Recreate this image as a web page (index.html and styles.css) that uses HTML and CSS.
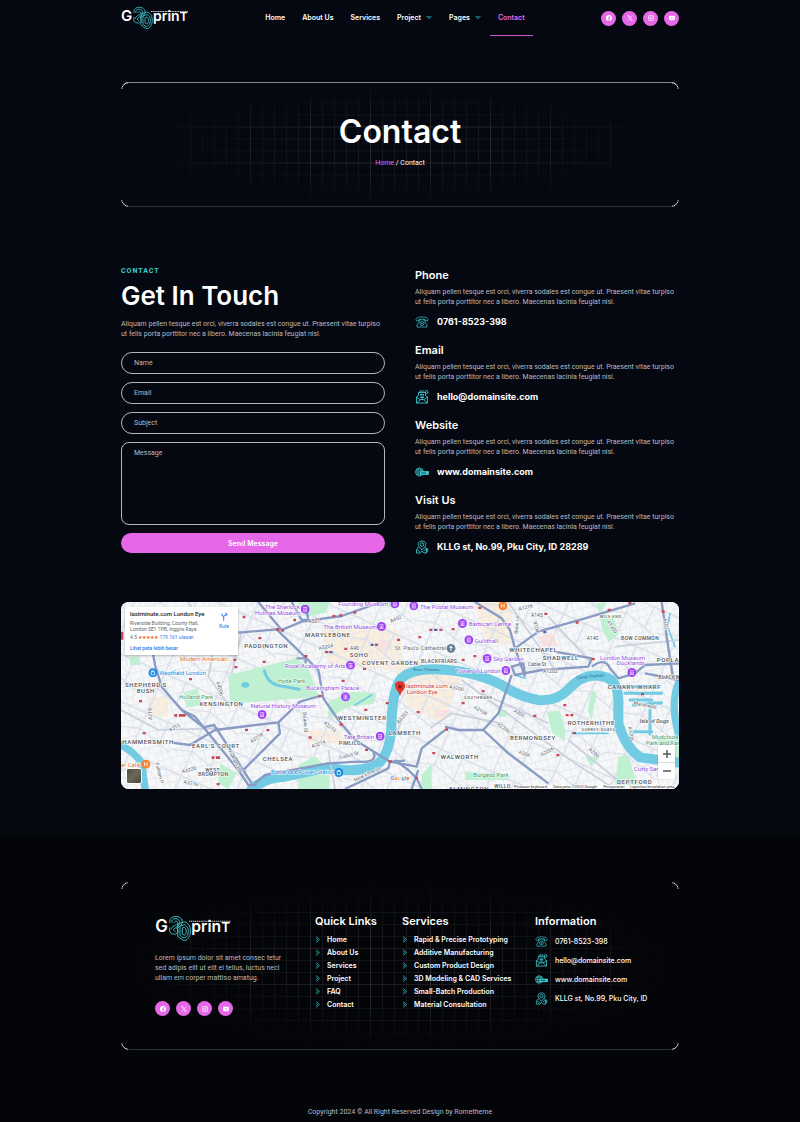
FILE: index.html
```html
<!DOCTYPE html>
<html lang="en">
<head>
<meta charset="utf-8">
<meta name="viewport" content="width=device-width, initial-scale=1">
<title>Contact – G3Dprint</title>
<link rel="stylesheet" href="styles.css">
</head>
<body>
<svg class="sprite" aria-hidden="true">
  <symbol id="print-mark" viewBox="0 0 68 24">
    <g fill="none" stroke="#46cfd4" stroke-width=".8" stroke-linejoin="round">
      <path d="M13 7C12 3 16 .5 20 1.500C24 2.500 25 6 23 9L19 12C21 13 21 17 17 17C13 17 12 14 13 11"/>
      <path d="M15 7C14 4 17 2.500 19.500 3.500C22 4.500 22.500 7 21 9L16 13L18 15"/>
      <path d="M17 7C17 5 20 5 20 7C20 9 14 10 14 13"/>
      <path d="M20 8L26 6C30 7 32 11 31 17C30 21 27 24 24 22L20 19Z"/>
      <path d="M22 10L26 8.500C29 10 30 13 29 17C28 20 26 21 24 20L22 18Z"/>
      <path d="M24 11.500L26 11C28 12 28 17 26 18L24 17Z"/>
    </g>
    <path d="M30 5.500H67" stroke="#fff" stroke-width="1" stroke-dasharray="1.200 .5" opacity=".8"/>
  </symbol>
  <symbol id="facebook" viewBox="0 0 16 16"><circle cx="8" cy="8" r="8" fill="#fff"/><path d="M7 16V10H5V7.500H7V6C7 4 8 3 10 3H11.500V5H10.300C9.500 5 9.300 5.500 9.300 6V7.500H11.500L11 10H9.300V16Z" fill="#e667e8"/></symbol>
  <symbol id="x" viewBox="0 0 16 16"><path d="M1.500 1.500H5L14.500 14.500H11ZM14 1L9 7M7 9L2 15" fill="none" stroke="#fff" stroke-width="1.600"/></symbol>
  <symbol id="instagram" viewBox="0 0 16 16"><rect x="1" y="1" width="14" height="14" rx="4" fill="none" stroke="#fff" stroke-width="1.800"/><circle cx="8" cy="8" r="3.200" fill="none" stroke="#fff" stroke-width="1.800"/><circle cx="12" cy="4" r="1" fill="#fff"/></symbol>
  <symbol id="youtube" viewBox="0 0 16 16"><rect x="0" y="2" width="16" height="12" rx="3.500" fill="#fff"/><path d="M6.500 5.500L11 8L6.500 10.500Z" fill="#e667e8"/></symbol>
  <symbol id="down" viewBox="0 0 12 8"><path d="M1 1L6 6.500L11 1M3.500 1L6 3.800L8.500 1" fill="none" stroke="#2fc4be" stroke-width="1.400"/></symbol>
  <symbol id="right" viewBox="0 0 8 12"><path d="M1 1L6.500 6L1 11M1 4L3 6L1 8" fill="none" stroke="#2fb5bd" stroke-width="1.500"/></symbol>
  <symbol id="phone" viewBox="0 0 28 24"><g fill="none" stroke="#3fd0d8" stroke-width="1.400"><path d="M2 9C1 4 7 2 14 2S27 4 26 9L21 10L20 6.500H8L7 10Z"/><path d="M9 7L8 12L4 18V22H24V18L20 12L19 7M11 7V9M17 7V9"/><circle cx="14" cy="15" r="4"/><circle cx="14" cy="15" r="1"/></g></symbol>
  <symbol id="mail" viewBox="0 0 28 28"><g fill="none" stroke="#3fd0d8" stroke-width="1.700"><path d="M3 14L7 11V5H21V11L25 14V26H3ZM3 14L11 20M25 14L17 20M3 26L11 19H17L25 26M10 9H18M10 12H18M10 15H18M12 18H16"/><circle cx="23" cy="4" r="3"/><path d="M10 5V2H18"/></g></symbol>
  <symbol id="web" viewBox="0 0 28 24"><g fill="none" stroke="#3fd0d8" stroke-width="1.400"><circle cx="9" cy="12" r="8"/><ellipse cx="9" cy="12" rx="3.500" ry="8"/><path d="M1 12H9M2 8H16M2 16H9"/><rect x="10" y="11" width="17" height="6" fill="#3fd0d8"/><path d="M12 14H22" stroke="#050810"/></g></symbol>
  <symbol id="place" viewBox="0 0 28 28"><g fill="none" stroke="#3fd0d8" stroke-width="1.700"><path d="M14 20L8 13C4 7 8 2 14 2S24 7 20 13Z"/><circle cx="14" cy="9" r="3.500"/><path d="M7 14L3 20V26H11L14 22L18 26H23V18L20 14M5 20L10 23M17 21L25 17L26 22L21 26"/></g></symbol>
  <symbol id="museum" viewBox="0 0 26 26"><circle cx="13" cy="13" r="13" fill="#a142f4"/><path d="M7 8H19M9 11V17M13 11V17M17 11V17M7 19H19" stroke="#fff" stroke-width="2"/></symbol>
  <symbol id="shop" viewBox="0 0 26 26"><circle cx="13" cy="13" r="13" fill="#168ae8"/><path d="M8 10H18V19H8ZM10 10V7H16V10" fill="none" stroke="#fff" stroke-width="2"/></symbol>
  <symbol id="cafe" viewBox="0 0 26 26"><circle cx="13" cy="13" r="13" fill="#f5832f"/><path d="M9 7V19M17 7V19M9 13H17" fill="none" stroke="#fff" stroke-width="2"/></symbol>
</svg>

<header class="wrap header">
  <a href="#" aria-label="G3Dprint home"><svg class="logo" viewBox="0 0 68 24"><text class="logo-word" x="0" y="15" font-size="15">G</text><use href="#print-mark" width="68" height="24"/><text class="logo-word" x="32" y="15" font-size="14">prin<tspan font-size="12">T</tspan></text></svg></a>
  <nav class="nav" aria-label="Main">
    <a href="#">Home</a><a href="#">About Us</a><a href="#">Services</a>
    <a href="#">Project <svg class="chevron"><use href="#down"/></svg></a>
    <a href="#">Pages <svg class="chevron"><use href="#down"/></svg></a>
    <a class="current" href="#">Contact</a>
  </nav>
  <div class="social">
    <a href="#" aria-label="Facebook"><svg><use href="#facebook"/></svg></a>
    <a href="#" aria-label="X"><svg><use href="#x"/></svg></a>
    <a href="#" aria-label="Instagram"><svg><use href="#instagram"/></svg></a>
    <a href="#" aria-label="YouTube"><svg><use href="#youtube"/></svg></a>
  </div>
</header>

<main>
  <section class="wrap frame hero">
    <h1>Contact</h1>
    <p><a href="#">Home</a> / Contact</p>
  </section>

  <section class="wrap contact">
    <div>
      <p class="eyebrow">CONTACT</p>
      <h2>Get In Touch</h2>
      <p class="copy">Aliquam pellen tesque est orci, viverra sodales est congue ut. Praesent vitae turpiso ut felis porta porttitor nec a libero. Maecenas lacinia feugiat nisl.</p>
      <form class="form">
        <input type="text" aria-label="Name" placeholder="Name">
        <input type="email" aria-label="Email" placeholder="Email">
        <input type="text" aria-label="Subject" placeholder="Subject">
        <textarea aria-label="Message" placeholder="Message"></textarea>
        <button type="submit">Send Message</button>
      </form>
    </div>
    <div class="details">
      <article><h3>Phone</h3><p class="copy">Aliquam pellen tesque est orci, viverra sodales est congue ut. Praesent vitae turpiso ut felis porta porttitor nec a libero. Maecenas lacinia feugiat nisl.</p><p class="value"><svg><use href="#phone"/></svg>0761-8523-398</p></article>
      <article><h3>Email</h3><p class="copy">Aliquam pellen tesque est orci, viverra sodales est congue ut. Praesent vitae turpiso ut felis porta porttitor nec a libero. Maecenas lacinia feugiat nisl.</p><p class="value"><svg><use href="#mail"/></svg>hello@domainsite.com</p></article>
      <article><h3>Website</h3><p class="copy">Aliquam pellen tesque est orci, viverra sodales est congue ut. Praesent vitae turpiso ut felis porta porttitor nec a libero. Maecenas lacinia feugiat nisl.</p><p class="value"><svg><use href="#web"/></svg>www.domainsite.com</p></article>
      <article><h3>Visit Us</h3><p class="copy">Aliquam pellen tesque est orci, viverra sodales est congue ut. Praesent vitae turpiso ut felis porta porttitor nec a libero. Maecenas lacinia feugiat nisl.</p><p class="value"><svg><use href="#place"/></svg>KLLG st, No.99, Pku City, ID 28289</p></article>
    </div>
  </section>

  <section class="wrap map" aria-label="Map">
    <svg class="tiles" viewBox="18 16 1674 561" preserveAspectRatio="xMidYMid slice">
      <defs>
        <pattern id="streets" width="62" height="46" patternUnits="userSpaceOnUse" patternTransform="rotate(-14)">
          <path d="M0 5H62M0 28H40M22 5V46M48 0V28M40 28V46M5 28V46" stroke="#e4e8ee" stroke-width="3" fill="none"/>
        </pattern>
        <pattern id="lanes" width="170" height="130" patternUnits="userSpaceOnUse" patternTransform="rotate(24)">
          <path d="M0 20H170M60 0V130M0 90L60 70L170 100M130 20V95" stroke="#d8dee8" stroke-width="4" fill="none"/>
        </pattern>
      </defs>
      <rect width="1700" height="600" fill="#f6f7f8"/>
      <g fill="#fbeedd"><path d="M620 90L860 100L860 200L1040 240L980 380L880 330L840 220L640 210Z"/><path d="M1080 16H1190V140H1110ZM100 300H160V360H100ZM580 400H680V440H580Z"/></g>
      <path d="M1270 120L1310 110L1330 145L1280 150ZM790 130H830V160H790ZM960 340H1010V360H960Z" fill="#fbe0dd"/>
      <rect width="1700" height="600" fill="url(#streets)"/>
      <rect width="1700" height="600" fill="url(#lanes)"/>
      <g fill="#c0f0d2">
        <path d="M340 235L545 185L580 215L612 300L345 322ZM545 16H645L632 48L575 60ZM640 315L710 285L785 290L775 322L700 330L640 365ZM550 505L600 478L644 520V577H550ZM205 290L248 275L262 325L215 332ZM315 500L365 530L340 577L310 560Z"/>
        <path d="M1450 45L1495 60L1512 110L1482 137L1462 100ZM1295 345L1335 342L1352 400L1350 432L1312 410ZM1050 525L1180 532L1178 550L1050 550ZM920 535L950 500V577H918ZM1440 20H1475L1455 50ZM1620 420H1692V490L1640 460ZM1430 280L1445 290L1430 370L1418 340ZM1510 480L1540 475L1570 577H1500ZM45 180H75V205H45ZM790 16H850V32H800ZM1150 340H1175V360H1150ZM1410 480L1455 480L1430 510Z"/>
      </g>
      <g fill="none" stroke="#70cbe3" stroke-linecap="round" stroke-linejoin="round">
        <path stroke-width="30" d="M400 592Q430 545 510 540L640 512Q710 530 775 510Q820 490 829 400Q830 290 855 250Q880 218 960 218Q1070 220 1160 265Q1210 300 1270 310Q1325 315 1360 278Q1410 225 1465 240Q1512 248 1510 320V380Q1530 450 1575 482L1692 498"/>
        <path stroke-width="22" d="M8 440Q60 465 80 500L92 590M1690 260Q1665 320 1690 410"/>
        <path stroke-width="9" d="M448 222Q460 265 500 268L552 278M1522 270H1620M1530 290H1640M1545 310H1610M1555 325L1640 318M1605 340V412M1550 405H1610"/>
        <path stroke-width="5" d="M1370 410H1480M1665 50L1658 90L1680 150M1200 235L1230 245M720 325L770 295"/>
        <ellipse cx="391" cy="265" rx="12" ry="8" fill="#70cbe3" stroke="none"/>
      </g>
      <g fill="none" stroke="#c9d0dc" stroke-width="5">
        <path d="M18 340L130 400L310 395M220 16L300 140L280 240L345 330M640 460L660 577M380 105L350 230M870 350L840 420M945 395L1010 350L1160 380M1040 250L1380 500L1500 577M1100 290L1300 380M1180 16L1320 220M1300 60L1430 200M1500 150L1692 130M1360 430L1540 577"/>
      </g>
      <g fill="none" stroke="#899bc4" stroke-width="7" stroke-linejoin="round">
        <path d="M105 120L120 205L140 270L200 340L265 392L297 385L340 450L410 560"/>
        <path d="M200 340L240 360L370 520L400 565H425"/>
        <path d="M170 438L225 445L300 400L490 377L555 315L615 298"/>
        <path d="M490 377L495 410L385 520"/>
        <path d="M370 108L485 98L610 220L625 305L670 370L720 430L825 495L870 492"/>
        <path d="M430 16L500 100L560 75L680 58L800 16"/>
        <path d="M530 16L560 70H580L575 40M545 185H572V200"/>
        <path d="M420 560L450 535L640 500L730 495Q790 500 775 465M825 495L820 515L690 577"/>
        <path d="M1080 16L1160 65L1185 100L1200 155L1230 240M1190 235L1150 350L1105 400L1180 470L1300 560"/>
        <path d="M1200 155L1270 105L1410 65L1560 20"/>
        <path d="M990 390L1030 400L1105 400M990 400L920 455L905 510L825 495M910 520L890 577"/>
        <path d="M840 490L880 520L905 545L920 577M1320 165L1430 185L1420 210L1280 220L1200 235L1190 210L1225 200L1230 235"/>
        <path d="M1430 210Q1470 180 1485 215L1510 245L1560 230L1590 205L1692 200M1590 230L1692 250M1640 16L1655 120L1675 250"/>
      </g>
      <g fill="#c94759">
        <path d="M383 57h8v8h-8zM535 66h8v8h-8zM484 94h9v8h-9zM499 97h8v8h-8zM430 121h9v7h-9zM355 186h9v7h-9zM443 192h9v7h-9zM358 208h9v7h-9zM568 175h9v7h-9zM610 295h10v7h-10zM222 244h9v7h-9zM72 310h9v7h-9zM178 352h9v8h-9zM192 352h20v8h-20zM83 406h9v7h-9zM390 396h9v7h-9zM454 397h9v7h-9zM581 419h9v7h-9zM674 380h9v7h-9zM748 336h9v7h-9zM812 316h9v7h-9zM680 249h9v7h-9zM744 213h9v7h-9zM630 163h10v7h-10zM688 153h9v7h-9zM780 141h9v7h-9zM846 126h9v7h-9zM290 479h8v8h-8zM303 479h12v8h-12zM305 559h9v7h-9zM821 491h9v7h-9zM750 456h9v7h-9zM652 55h9v7h-9zM673 53h9v7h-9zM715 44h9v7h-9zM943 96h9v7h-9zM973 96h9v7h-9zM1010 94h9v7h-9zM910 118h9v7h-9zM1040 186h9v7h-9zM1075 175h9v7h-9zM1100 280h9v7h-9zM1040 316h9v7h-9zM905 343h9v7h-9zM1255 354h9v7h-9zM1352 352h9v7h-9zM1366 352h9v7h-9zM1374 406h9v7h-9zM1324 472h9v7h-9zM952 466h9v7h-9zM900 540h9v7h-9zM990 395h9v7h-9zM1345 322h9v7h-9zM1430 184h9v7h-9zM1382 74h9v7h-9zM1478 36h9v7h-9zM1540 16h9v7h-9zM1640 41h9v7h-9zM1578 289h9v7h-9zM1288 48h9v7h-9zM1090 30h9v7h-9zM18 105h7v24h-7z"/>
        <path d="M643 163h10v7h-10zM767 141h9v7h-9zM957 96h10v7h-10zM1285 103h9v7h-9z" fill="#5963a8"/>
      </g>
      <g class="road">
        <text x="580" y="78">A501</text><text transform="translate(828 78) rotate(-22)">A402</text><text transform="translate(612 160) rotate(-12)">A5204</text><text x="705" y="160">A40</text><text transform="translate(1212 42) rotate(-14)">A1216</text><text x="1248" y="60">A145</text><text x="1415" y="130">A140</text><text x="1238" y="209">Cable St</text><text x="1284" y="228">A1203</text><text transform="translate(1002 275) rotate(12)">A3200</text><text transform="translate(165 405) rotate(-28)">A315</text><text transform="translate(410 440) rotate(-35)">A3218</text><text transform="translate(592 454) rotate(-20)">A3214</text><text transform="translate(202 530) rotate(-15)">A3220</text><text transform="translate(205 560) rotate(12)">A3216</text><text transform="translate(675 486) rotate(-12)">Lupus St</text><text transform="translate(1075 335) rotate(30)">A2198</text><text transform="translate(1195 345) rotate(30)">A200</text><text transform="translate(1210 470) rotate(20)">A206</text><text transform="translate(1280 480) rotate(-30)">A2206</text><text transform="translate(1555 323) rotate(12)">Marshwall</text><text transform="translate(1145 385) rotate(35)">A2206</text><text transform="translate(720 555) rotate(-25)">Nine Elms Ln</text><text transform="translate(1115 120) rotate(0)"></text>
        <text transform="translate(112 370) rotate(-90)">A219</text><text transform="translate(304 256) rotate(75)">A4206</text><text transform="translate(563 345) rotate(85)">Sloane St</text><text transform="translate(340 465) rotate(62)">Fulham Rd</text><text transform="translate(120 500) rotate(75)">Fulham P</text><text transform="translate(625 380) rotate(40)">A3215</text><text transform="translate(852 382) rotate(-50)">A3203</text><text transform="translate(1255 75) rotate(75)">B108</text><text transform="translate(1475 75) rotate(55)">A1205</text><text transform="translate(1645 65) rotate(82)">A102</text><text transform="translate(1540 390) rotate(82)">A1206</text><text transform="translate(1208 112) rotate(-85)">Bank La</text><text transform="translate(1420 460) rotate(40)">A200</text>
      </g>
      <g class="area">
        <text x="388" y="154">PADDINGTON</text><text x="570" y="120">MARYLEBONE</text><text x="704" y="181">SOHO</text><text x="741" y="205">COVENT GARDEN</text><text x="30" y="271">SHEPHERD'S</text><text x="65" y="289">BUSH</text><text x="254" y="329">KENSINGTON</text><text x="668" y="369">WESTMINSTER</text><text x="22" y="443">HAMMERSMITH</text><text x="231" y="453">EARL'S COURT</text><text x="671" y="446" class="tight">PIMLICO</text><text x="443" y="492">CHELSEA</text><text x="271" y="525" class="tight">WEST</text><text x="250" y="539" class="tight">BROMPTON</text><text x="821" y="416">LAMBETH</text><text x="977" y="487">WALWORTH</text><text x="1185" y="429">BERMONDSEY</text><text x="1358" y="384">ROTHERHITHE</text><text x="1478" y="278">CANARY WHARF</text><text x="1283" y="189">SHADWELL</text><text x="1183" y="167">WHITECHAPEL</text><text x="918" y="200" class="tight">BLACKFRIARS</text><text x="1518" y="129" class="tight">BOW COMMON</text><text x="1625" y="195">POPLAR</text><text x="1630" y="247" class="tight">BLACKWALL</text><text x="1506" y="563">DEPTFORD</text><text x="1003" y="583">ELMINGTON</text><text x="1048" y="306" class="mini">SOUTHWARK</text><text x="1455" y="63" class="mini">MILE END</text><text x="1400" y="403" class="mini">SURREY QUAYS</text><text x="1138" y="574" class="tight">WILLO</text><text x="1574" y="380" class="isle">Isle of Dogs</text>
      </g>
      <g class="poi">
        <text x="450" y="38">The Sherlock</text><text x="420" y="54">Holmes Museum</text><text x="670" y="28">Founding Museum</text><text x="625" y="98">The British Museum</text><text x="510" y="214">Royal Academy of Arts</text><text x="574" y="279">Buckingham Palace</text><text x="407" y="333">Natural History Museum</text><text x="686" y="427">Tate Britain</text><text x="915" y="36">The Postal Museum</text><text x="1061" y="89">Barbican Centre</text><text x="1079" y="138">Guildhall</text><text x="1135" y="194">Sky Garden</text><text x="1022" y="230">Tower of London</text><text x="1455" y="189">London Museum</text><text x="1505" y="206">Docklands</text><text x="1557" y="524">Cutty Sark</text>
        <g class="blue"><text x="133" y="236">Westfield London</text><text x="468" y="533">Battersea Power Station</text></g>
        <g class="green"><text x="192" y="307">Holland Park</text><text x="489" y="259">Hyde Park</text><text x="1075" y="540">Burgess Park</text><text x="1610" y="427">Mudchute</text><text x="1592" y="445">Park and Farm</text></g>
        <g class="orange"><text x="195" y="193">Modern American...</text><text x="18" y="511">er Café</text></g>
        <g class="gray"><text x="839" y="161">St. Paul's Cathedral</text></g>
        <g class="river"><text x="895" y="223">River Thames</text><text transform="translate(1385 248) rotate(-6)">Canal Thames</text></g>
        <g class="red"><text x="873" y="273">lastminute.com</text><text x="875" y="291">London Eye</text></g>
        <text x="826" y="550" fill="#4285f4" class="google">G<tspan fill="#ea4335">o</tspan><tspan fill="#fbbc05">o</tspan><tspan fill="#4285f4">g</tspan><tspan fill="#34a853">l</tspan><tspan fill="#ea4335">e</tspan></text>
      </g>
      <use href="#museum" x="557" y="24" width="27" height="27"/><use href="#museum" x="826" y="8" width="27" height="27"/><use href="#museum" x="786" y="76" width="27" height="27"/><use href="#museum" x="693" y="192" width="27" height="27"/><use href="#museum" x="678" y="287" width="27" height="27"/><use href="#museum" x="428" y="340" width="27" height="27"/><use href="#museum" x="782" y="405" width="27" height="27"/><use href="#museum" x="883" y="14" width="27" height="27"/><use href="#museum" x="1029" y="67" width="27" height="27"/><use href="#museum" x="1048" y="116" width="27" height="27"/><use href="#museum" x="1103" y="172" width="27" height="27"/><use href="#museum" x="1159" y="208" width="27" height="27"/><use href="#museum" x="1537" y="214" width="27" height="27"/>
      <use href="#shop" x="100" y="215" width="27" height="27"/><use href="#shop" x="658" y="514" width="27" height="27"/><use href="#cafe" x="1150" y="14" width="27" height="27"/><use href="#cafe" x="79" y="489" width="27" height="27"/>
      <circle cx="1008" cy="155" r="13" fill="#607d8b"/><path d="M1008 147V163M1003 152H1013" stroke="#fff" stroke-width="3"/>
      <path d="M855 298Q851 285 843 278Q834 258 850 254Q872 252 870 270Q868 280 860 286Z" fill="#e2352d"/><circle cx="855" cy="270" r="6" fill="#8d1f1b"/>
      <rect x="1195" y="565" width="497" height="12" fill="#fff" opacity=".7"/>
      <g class="credit"><text x="1197" y="574">Pintasan keyboard</text><text x="1315" y="574">Data peta ©2023 Google</text><text x="1465" y="574">Persyaratan</text><text x="1545" y="574">Laporkan kesalahan peta</text></g>
    </svg>
    <div class="place">
      <div><strong>lastminute.com London Eye</strong>
      <p>Riverside Building, County Hall,<br>London SE1 7PB, Inggris Raya</p>
      <p class="rating">4.5 <span>★★★★★</span> <a href="#">179.161 ulasan</a></p>
      <a class="larger" href="#">Lihat peta lebih besar</a></div>
      <a class="route" href="#"><svg viewBox="0 0 20 24"><path d="M9 23V13L3 5M9 13Q10 9 18 6M13 3L18 6L15 10" fill="none" stroke="#4b8df0" stroke-width="3"/></svg>Rute</a>
    </div>
    <button class="satellite" type="button" aria-label="Satellite view"></button>
    <div class="zoom"><button type="button" aria-label="Zoom in"><svg viewBox="0 0 8 8"><path d="M0 4H8M4 0V8" stroke="#555" stroke-width="1.500"/></svg></button><button type="button" aria-label="Zoom out"><svg viewBox="0 0 8 8"><path d="M0 4H8" stroke="#555" stroke-width="1.500"/></svg></button></div>
  </section>
</main>

<footer class="footer">
  <div class="wrap frame foot">
    <div class="about">
      <svg class="logo" viewBox="0 0 68 24"><text class="logo-word" x="0" y="15" font-size="15">G</text><use href="#print-mark" width="68" height="24"/><text class="logo-word" x="32" y="15" font-size="14">prin<tspan font-size="12">T</tspan></text></svg>
      <p class="copy">Lorem ipsum dolor sit amet consec tetur sed adipis elit ut elit el tellus, luctus necl ullam em corper mattiso amatug.</p>
      <div class="social">
        <a href="#" aria-label="Facebook"><svg><use href="#facebook"/></svg></a>
        <a href="#" aria-label="X"><svg><use href="#x"/></svg></a>
        <a href="#" aria-label="Instagram"><svg><use href="#instagram"/></svg></a>
        <a href="#" aria-label="YouTube"><svg><use href="#youtube"/></svg></a>
      </div>
    </div>
    <nav aria-label="Quick links">
      <h3>Quick Links</h3>
      <ul class="links">
        <li><a href="#"><svg><use href="#right"/></svg>Home</a></li><li><a href="#"><svg><use href="#right"/></svg>About Us</a></li><li><a href="#"><svg><use href="#right"/></svg>Services</a></li><li><a href="#"><svg><use href="#right"/></svg>Project</a></li><li><a href="#"><svg><use href="#right"/></svg>FAQ</a></li><li><a href="#"><svg><use href="#right"/></svg>Contact</a></li>
      </ul>
    </nav>
    <nav aria-label="Services">
      <h3>Services</h3>
      <ul class="links">
        <li><a href="#"><svg><use href="#right"/></svg>Rapid &amp; Precise Prototyping</a></li><li><a href="#"><svg><use href="#right"/></svg>Additive Manufacturing</a></li><li><a href="#"><svg><use href="#right"/></svg>Custom Product Design</a></li><li><a href="#"><svg><use href="#right"/></svg>3D Modeling &amp; CAD Services</a></li><li><a href="#"><svg><use href="#right"/></svg>Small-Batch Production</a></li><li><a href="#"><svg><use href="#right"/></svg>Material Consultation</a></li>
      </ul>
    </nav>
    <div>
      <h3>Information</h3>
      <ul class="info">
        <li><svg><use href="#phone"/></svg>0761-8523-398</li><li><svg><use href="#mail"/></svg>hello@domainsite.com</li><li><svg><use href="#web"/></svg>www.domainsite.com</li><li><svg><use href="#place"/></svg>KLLG st, No.99, Pku City, ID</li>
      </ul>
    </div>
  </div>
  <p class="copyright">Copyright 2024 © All Right Reserved Design by Rometheme</p>
</footer>
</body>
</html>
```
FILE: styles.css
```css
* { box-sizing: border-box; }
body { margin: 0; background: #050810; color: #fff; font: 7px/10px Roboto, "Liberation Sans", sans-serif; }
h1, h2, h3, p, ul { margin: 0; padding: 0; }
h1, h2, h3, .nav, .value, .links, .info, .form button { font-family: Inter, "Liberation Sans", sans-serif; }
ul { list-style: none; }
a { color: inherit; text-decoration: none; }
svg { display: block; }
.sprite { position: absolute; width: 0; height: 0; }
.wrap { width: calc(100% - 32px); max-width: 558px; margin-inline: auto; }

.header { display: flex; justify-content: space-between; align-items: center; min-height: 36px; }
.logo { width: 68px; height: 24px; overflow: visible; }
.logo-word { fill: #fff; font-family: Inter, sans-serif; font-weight: 600; }
.nav { display: flex; gap: 1px; }
.nav a { display: flex; align-items: center; gap: 5px; height: 36px; padding: 0 8px; border-bottom: 1px solid transparent; font-weight: 600; }
.nav .current { color: #e667e8; border-color: #c45bc8; }
.chevron { width: 6px; height: 5px; }
.social { display: flex; gap: 6px; }
.social a { display: grid; place-items: center; width: 15px; height: 15px; border-radius: 50%; background: #e667e8; }
.social svg { width: 6px; height: 6px; }

.frame { position: relative; border: 1px solid; border-color: #85878c transparent #303239; border-radius: 8px; isolation: isolate; }
.frame::before, .frame::after { content: ""; position: absolute; inset: -1px; pointer-events: none; }
.frame::before {
  border: 1px solid #d4d5d8; border-radius: 8px;
  mask: linear-gradient(#000 0 0) 0 0 / 7px 7px no-repeat, linear-gradient(#000 0 0) 100% 0 / 7px 7px no-repeat, linear-gradient(#000 0 0) 0 100% / 7px 7px no-repeat, linear-gradient(#000 0 0) 100% 100% / 7px 7px no-repeat;
}
.frame::after {
  z-index: -1;
  background:
    linear-gradient(90deg, #25272b 1px, transparent 1px) center / 60px 60px,
    linear-gradient(#1c1e22 1px, transparent 1px) center / 36px 36px,
    linear-gradient(90deg, #15171b 1px, transparent 1px) center / 12px 12px,
    linear-gradient(#121418 1px, transparent 1px) center / 12px 12px;
  mask: radial-gradient(closest-side, #000 40%, transparent 98%);
}
.hero { margin-top: 46px; padding: 31px 16px 38px; text-align: center; }
.hero h1 { font-size: 32px; line-height: 36px; font-weight: 600; }
.hero p { margin-top: 8px; }
.hero a { color: #e667e8; }

.contact { display: grid; grid-template-columns: 1fr 1fr; gap: 30px; padding: 59px 0 47px; }
.eyebrow { color: #3fd0d8; font-weight: 700; letter-spacing: 1px; }
.contact h2 { margin-top: 5px; font-size: 26px; line-height: 30px; font-weight: 600; }
.copy { color: #b9bbc0; }
.contact h2 + .copy { margin-top: 8px; }
.form { display: grid; gap: 8px; margin-top: 13px; }
.form input, .form textarea { width: 100%; height: 22px; padding: 0 12px; border: 1px solid #b4b6ba; border-radius: 11px; background: transparent; color: #fff; font: inherit; }
.form textarea { display: block; height: 83px; padding-top: 5px; border-radius: 8px; resize: none; }
.form ::placeholder { color: #b9bbc0; opacity: 1; }
.form button { height: 20px; padding: 0; border: 0; border-radius: 10px; background: #e667e8; color: #fff; font-size: 7px; font-weight: 600; }
.details { display: grid; gap: 14px; align-content: start; padding-top: 3px; }
.details h3 { font-size: 11px; line-height: 12px; font-weight: 600; margin-bottom: 6px; }
.value { display: flex; align-items: center; gap: 8px; height: 16px; margin-top: 7px; font-size: 9px; font-weight: 700; }
.value svg { width: 14px; height: 14px; }

.map { position: relative; overflow: hidden; border-radius: 8px; background: #f6f7f8; }
.tiles { width: 100%; height: auto; }
.tiles text { paint-order: stroke; stroke: #fff; stroke-width: 3px; }
.road { font-size: 15px; fill: #4c5667; }
.area { font-size: 18px; letter-spacing: 2px; fill: #50545b; font-weight: 500; }
.area .tight { font-size: 15px; letter-spacing: 1px; }
.area .mini { font-size: 11px; }
.area .isle { font-size: 17px; letter-spacing: 0; font-style: italic; }
.poi { font-size: 18px; fill: #944ee0; }
.poi .blue { fill: #2288dc; }
.poi .green { fill: #3c9869; }
.poi .orange { fill: #dc7130; }
.poi .gray { fill: #68737e; }
.poi .red { fill: #cf3730; }
.poi .river { font-size: 13px; fill: #28759a; }
.poi .river text { stroke: none; }
.poi .google { font-size: 18px; font-weight: 500; }
.credit { font-size: 12px; fill: #333; }
.place { position: absolute; top: 5px; left: 4px; display: flex; justify-content: space-between; width: 113px; height: 48px; padding: 4px 9px 0 5px; background: #fff; color: #666; box-shadow: 0 1px 2px #0004; font-size: 5px; line-height: 6px; }
.place strong { display: block; margin-bottom: 3px; color: #222; font-size: 6px; line-height: 6px; font-weight: 500; white-space: nowrap; }
.place p { white-space: nowrap; }
.place a { color: #2c7be5; }
.place .rating { margin: 2px 0 5px; }
.rating span { color: #e7711b; }
.place .larger { display: block; font-weight: 500; }
.place .route { margin-top: 1px; text-align: center; }
.route svg { width: 8px; height: 9px; margin: 0 auto 2px; }
.satellite { position: absolute; left: 5px; bottom: 5px; width: 16px; height: 16px; padding: 0; border: 1px solid #fff; border-radius: 2px; background: linear-gradient(135deg, #4d5143, #6b675b 50%, #42483e); }
.zoom { position: absolute; right: 4px; bottom: 10px; display: grid; width: 17px; background: #fff; box-shadow: 0 0 1px #0005; }
.zoom button { display: grid; place-items: center; height: 17px; padding: 0; border: 0; background: none; }
.zoom button + button { border-top: 1px solid #ddd; }
.zoom svg { width: 8px; height: 8px; }

.footer { margin-top: 45px; padding: 48px 0 7px; background: #040508; }
.foot { display: grid; grid-template-columns: 160px 87px 133px 1fr; padding: 32px 32px 33px 33px; border-top-color: transparent; }
.about { width: 130px; }
.about .logo { width: 77px; height: 27px; }
.about .copy { margin: 11px 0 18px; }
.foot h3 { font-size: 11px; line-height: 13px; font-weight: 600; white-space: nowrap; }
.links { margin-top: 5px; }
.links a { display: flex; align-items: center; gap: 6px; height: 13px; font-weight: 600; white-space: nowrap; }
.links svg { width: 6px; height: 7px; }
.info { margin-top: 4px; }
.info li { display: flex; align-items: center; gap: 7px; height: 19px; font-weight: 500; white-space: nowrap; }
.info svg { width: 13px; height: 13px; }
.copyright { margin-top: 57px; text-align: center; color: #b9bbc0; }
```
